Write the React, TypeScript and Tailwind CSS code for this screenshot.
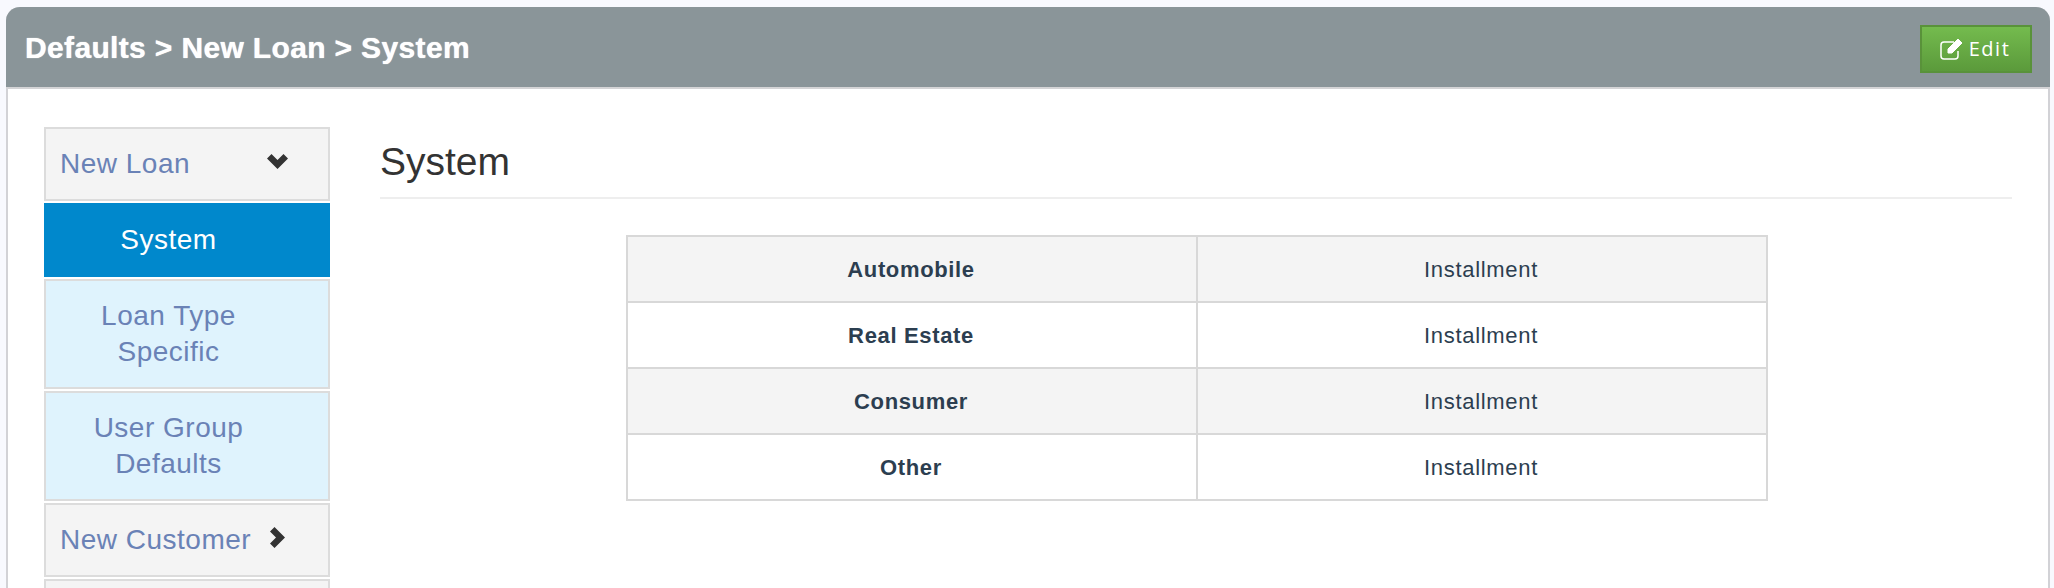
const rows = [
  { label: "Automobile", value: "Installment" },
  { label: "Real Estate", value: "Installment" },
  { label: "Consumer", value: "Installment" },
  { label: "Other", value: "Installment" },
];

function ChevronDown() {
  return (
    <svg viewBox="0 0 21 15" className="mb-[6px] ml-[77px] h-[15px] w-[21px] fill-[#333]">
      <path d="M0 4.5 4.5 0l6 6 6-6L21 4.5 10.5 15z" />
    </svg>
  );
}

function ChevronRight() {
  return (
    <svg viewBox="0 0 15 21" className="mb-[6px] ml-[19px] h-[21px] w-[15px] fill-[#333]">
      <path d="M4.5 0 15 10.5 4.5 21 0 16.5l6-6-6-6z" />
    </svg>
  );
}

function NavGroup({ label, open }: { label: string; open?: boolean }) {
  return (
    <div className="flex h-[74px] items-center border-2 border-[#dcdcdc] bg-[#f4f4f4] pl-[14px] text-[28px] tracking-[0.5px] text-[#6a82b6]">
      <span>{label}</span>
      {open ? <ChevronDown /> : <ChevronRight />}
    </div>
  );
}

function NavChild({ lines }: { lines: string[] }) {
  return (
    <div className="flex h-[110px] flex-col items-center justify-center border-2 border-[#dcdcdc] bg-[#dff3fd] pr-[37px] text-[28px] leading-[36px] tracking-[0.5px] text-[#6a82b6]">
      {lines.map((line) => (
        <span key={line}>{line}</span>
      ))}
    </div>
  );
}

export default function App() {
  return (
    <div className="h-[588px] overflow-hidden bg-[#f8f9fe] pt-[7px] pr-[4px] pl-[6px] font-['Liberation_Sans',sans-serif]">
      <div className="h-[700px] rounded-t-[14px] border-x-2 border-[#d2d2d6] bg-white">
        <div className="-mx-[2px] flex h-[82px] items-center justify-between rounded-t-[14px] border-b-2 border-[#d4d4d6] bg-[#8a9599] pr-[18px] pl-[19px]">
          <h1 className="text-[30px] font-bold tracking-[0.35px] text-white [text-shadow:0_0_1px_#fff]">
            Defaults &gt; New Loan &gt; System
          </h1>
          <button className="mt-[4px] flex h-[48px] w-[112px] items-center justify-center gap-[6px] border-2 border-[#59923a] bg-gradient-to-b from-[#74bb4e] to-[#5b9a3b] pr-[3px] font-['Open_Sans',sans-serif] text-[20px] tracking-[1.5px] text-white">
            <svg viewBox="0 0 24 24" className="size-[24px] fill-none stroke-white stroke-[1.5]">
              <path d="M19 14v5a3 3 0 0 1-3 3H5a3 3 0 0 1-3-3V8a3 3 0 0 1 3-3h10" />
              <path d="M9 12v4h4L23 6l-4-4z" className="fill-white stroke-1" />
            </svg>
            Edit
          </button>
        </div>

        <div className="flex pt-[38px] pr-[36px] pl-[36px]">
          <nav className="flex w-[286px] shrink-0 flex-col gap-[2px]">
            <NavGroup label="New Loan" open />
            <div className="flex h-[74px] items-center justify-center bg-[#0088cc] pr-[37px] text-[28px] tracking-[0.5px] text-white">
              System
            </div>
            <NavChild lines={["Loan Type", "Specific"]} />
            <NavChild lines={["User Group", "Defaults"]} />
            <NavGroup label="New Customer" />
            <div className="h-[74px] border-2 border-[#dcdcdc] bg-[#f4f4f4]" />
          </nav>

          <main className="ml-[50px] flex-1">
            <h2 className="h-[72px] border-b-2 border-[#eeeeee] pt-[13px] text-[39px] leading-[44px] text-[#333]">
              System
            </h2>
            <div className="pt-[36px] pl-[2px]">
              <table className="mx-auto w-[1142px] table-fixed border-collapse border-2 border-[#d8d8d8] text-[22px]">
                <tbody>
                  {rows.map((row, index) => (
                    <tr key={row.label} className={index % 2 === 0 ? "h-[66px] bg-[#f4f4f4]" : "h-[66px] bg-white"}>
                      <td className="border-2 border-[#d8d8d8] pr-[2px] text-center font-bold tracking-[0.65px] text-[#2c3e50]">
                        {row.label}
                      </td>
                      <td className="border-2 border-[#d8d8d8] pr-[2px] text-center tracking-[0.7px] text-[#2c3e50]">
                        {row.value}
                      </td>
                    </tr>
                  ))}
                </tbody>
              </table>
            </div>
          </main>
        </div>
      </div>
    </div>
  );
}
